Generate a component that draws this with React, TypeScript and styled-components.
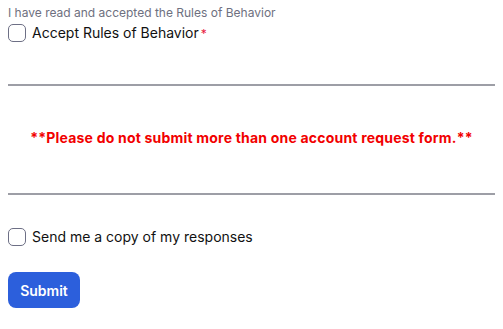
import React from 'react';
import styled, { createGlobalStyle } from 'styled-components';

const GlobalStyle = createGlobalStyle`
  body {
    margin: 0;
    padding: 0 8px;
    font-family: Inter, "Liberation Sans", sans-serif;
    background: #ffffff;
    color: #1a1a1a;
  }
`;

const Form = styled.form`
  display: flex;
  flex-direction: column;
  width: 487px;
`;

const FieldLabel = styled.div`
  font-size: 12px;
  line-height: 16px;
  color: #6e7080;
  margin-top: 5px;
`;

const CheckRow = styled.label<{ $top: number }>`
  display: flex;
  align-items: center;
  gap: 6px;
  margin-top: ${(p) => p.$top}px;
  font-size: 14px;
  line-height: 18px;
  color: #111111;
  cursor: pointer;
`;

const Box = styled.input.attrs({ type: 'checkbox' })`
  appearance: none;
  margin: 0;
  width: 18px;
  height: 18px;
  border: 1px solid #6d6f85;
  border-radius: 5px;
  background: #fff;
`;

const Required = styled.span`
  color: #e8173f;
  font-size: 12px;
  margin-left: 2px;
  align-self: flex-start;
  line-height: 14px;
`;

const Rule = styled.hr<{ $top: number }>`
  margin: ${(p) => p.$top}px 0 0;
  border: none;
  border-top: 2px solid #9d9ea6;
  height: 0;
`;

const Notice = styled.p`
  margin: 43px 0 0;
  text-align: center;
  color: #f20000;
  font-weight: 700;
  font-size: 14px;
  letter-spacing: 0.2px;
  line-height: 18px;
`;

const SubmitButton = styled.button`
  margin-top: 26px;
  width: 72px;
  height: 36px;
  border: none;
  border-radius: 8px;
  background: #2c5fdc;
  color: #ffffff;
  font-family: Inter, "Liberation Sans", sans-serif;
  font-weight: 600;
  font-size: 14px;
  cursor: pointer;
`;

const App: React.FC = () => {
  return (
    <>
      <GlobalStyle />
      <Form onSubmit={(e) => e.preventDefault()}>
        <FieldLabel>I have read and accepted the Rules of Behavior</FieldLabel>
        <CheckRow $top={3}>
          <Box />
          <span>
            Accept Rules of Behavior<Required>*</Required>
          </span>
        </CheckRow>
        <Rule $top={42} />
        <Notice>**Please do not submit more than one account request form.**</Notice>
        <Rule $top={46} />
        <CheckRow $top={33}>
          <Box />
          <span>Send me a copy of my responses</span>
        </CheckRow>
        <div>
          <SubmitButton type="submit">Submit</SubmitButton>
        </div>
      </Form>
    </>
  );
};

export default App;
